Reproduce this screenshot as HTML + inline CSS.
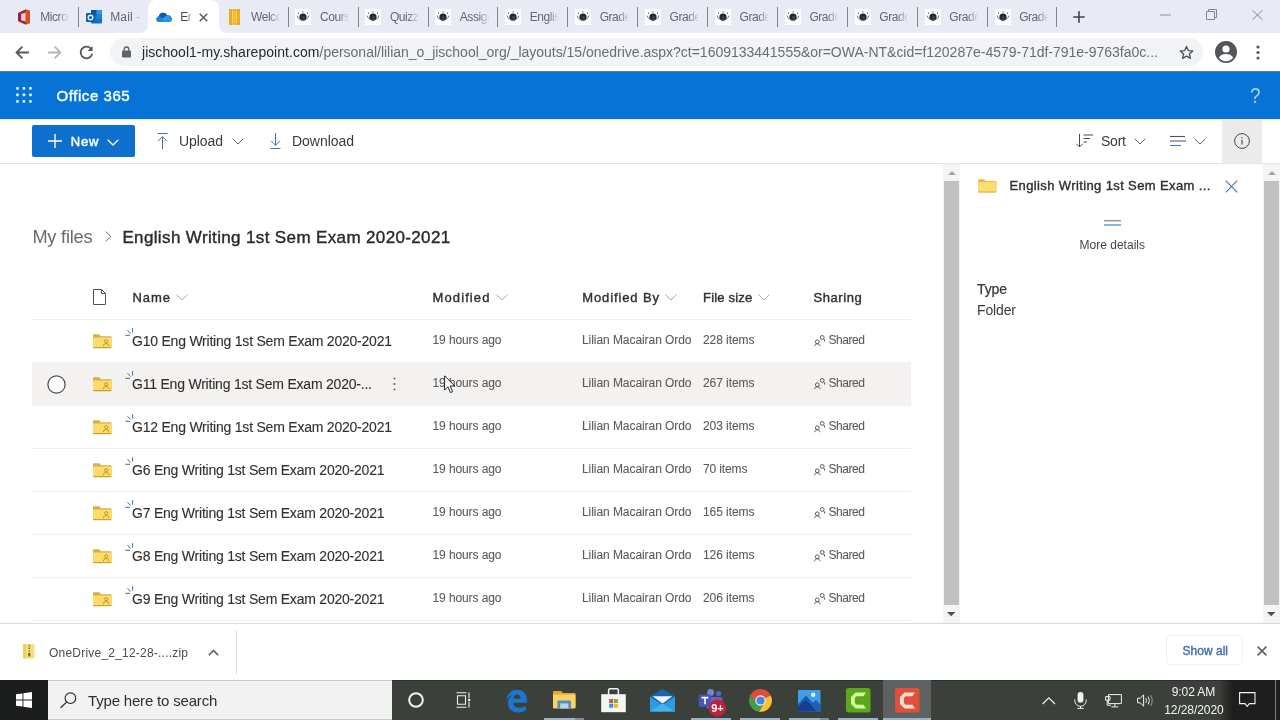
<!DOCTYPE html>
<html lang="en">
<head>
<meta charset="utf-8">
<title>English Writing 1st Sem Exam 2020-2021 - OneDrive</title>
<style>

*{box-sizing:border-box;margin:0;padding:0}
html,body{width:1280px;height:720px;overflow:hidden;background:#fff}
body{font-family:"Liberation Sans",sans-serif;color:#323130;position:relative;font-size:14px}
#root{position:absolute;left:0;top:0;width:1280px;height:720px;overflow:hidden}
.t{will-change:opacity}
.a{position:absolute}
svg{position:absolute;overflow:visible}
.t{position:absolute;white-space:nowrap;line-height:normal}
#tabstrip{left:0;top:0;width:1280px;height:33px;background:#e8ebf4}
#acttab{left:147.6px;top:0;width:71.3px;height:33px;background:#fff;border-radius:8px 8px 0 0}
.curl{width:8px;height:8px;top:25px;background:#fff}
.curl i{position:absolute;left:0;top:0;width:8px;height:8px;background:#e8ebf4}
#toolbar{left:0;top:33px;width:1280px;height:38px;background:#fff}
#omni{left:110px;top:38px;width:1093px;height:28px;border-radius:14px;background:#f1f3f4}
.sep{width:1px;height:20px;top:7px;background:#80848a}
.tt{overflow:hidden;-webkit-mask-image:linear-gradient(90deg,#000 0,#000 60%,transparent 98%);mask-image:linear-gradient(90deg,#000 0,#000 60%,transparent 98%)}
.fav{width:16px;height:16px;top:9px;background:#fdfdfe}
#suite{left:0;top:71px;width:1280px;height:48px;background:#0873d7;border-top:1px solid #4c7fb4}
#cmd{left:0;top:119px;width:1280px;height:45px;background:#fff;border-bottom:1px solid #e6e5e4;border-top:1px solid #dff3fd}
#newbtn{left:32px;top:125px;width:103px;height:32px;background:#0e70cd;border-radius:2px}
#infobtn{left:1222px;top:119px;width:40px;height:44px;background:#ecebea}
#hover{left:32px;top:362px;width:879px;height:43px;background:#f3f2f1}
.rl{left:32px;width:879px;height:1px;background:#f0efee}
.track{background:#f4f4f4;width:17px;top:164px;height:459px}
.thumb{background:#c1c1c1;width:15.2px;top:181px;height:424px;margin-left:.9px}
#dlbar{left:0;top:622.6px;width:1280px;height:58px;background:#fff;border-top:1px solid #d9d9d9}
#showall{left:1166px;top:635px;width:77px;height:30px;border:1px solid #f1f2f4;border-radius:4px;background:#fff}
#taskbar{left:0;top:680px;width:1280px;height:40px;background:#3c403a;border-top:1px solid #2c2f2b}
#start{left:0;top:680px;width:48px;height:40px;background:#1c1d1d}
#search{left:48px;top:680px;width:344px;height:40px;background:#f2f2f2;border-top:1px solid #c9c9c9;border-bottom:1px solid #c9c9c9}
#tbact{left:883px;top:680px;width:48px;height:40px;background:#5d6260}
.ul{top:718px;height:2px;background:#9bb3c6}

</style>
</head>
<body>
<div id="root">
<!-- ===== browser chrome ===== -->
<div class="a" id="tabstrip"></div>
<div class="a" id="acttab"></div>
<div class="a curl" style="left:139.6px"><i style="border-radius:0 0 8px 0"></i></div>
<div class="a curl" style="left:218.8px"><i style="border-radius:0 0 0 8px"></i></div>
<div class="a" id="toolbar"></div>
<div class="a" id="omni"></div>
<div class="a sep" style="left:77.9px"></div>
<div class="a sep" style="left:287.7px"></div>
<div class="a sep" style="left:357.6px"></div>
<div class="a sep" style="left:427.5px"></div>
<div class="a sep" style="left:497.4px"></div>
<div class="a sep" style="left:567.3px"></div>
<div class="a sep" style="left:637.3px"></div>
<div class="a sep" style="left:707.2px"></div>
<div class="a sep" style="left:777.1px"></div>
<div class="a sep" style="left:847.0px"></div>
<div class="a sep" style="left:916.9px"></div>
<div class="a sep" style="left:986.9px"></div>
<div class="a sep" style="left:1055.9px"></div>
<svg style="left:17px;top:9px" width="14" height="16" viewBox="0 0 14 16"><path d="M1 4.2 L8.6 0.6 L13 1.8 V14 L8.6 15.4 L1 12 Z" fill="#b3312c"/><path d="M8.6 0.6 L13 1.8 V14 L8.6 15.4 Z" fill="#d4501c"/><path d="M1 4.2 L8.6 0.6 V3 L4.2 4.8 V11.2 L8.6 13 V15.4 L1 12 Z" fill="#8c2b40"/><path d="M4.2 4.9 L8.6 3.4 V12.6 L4.2 11.2 Z" fill="#f6c3c6"/></svg>
<div class="t tt" style="left:40.30px;top:10.00px;font-size:12px;color:#63676e;width:30px;letter-spacing:-0.45px;">Microsoft</div>
<svg style="left:86px;top:9px" width="16" height="16" viewBox="0 0 16 16"><rect x="5" y="1" width="11" height="13.5" rx="1" fill="#1173c7"/><rect x="5" y="1" width="5.5" height="4.5" fill="#0d4f8f"/><rect x="10.5" y="1" width="5.5" height="4.5" fill="#2a9be6"/><rect x="10.5" y="5.5" width="5.5" height="4.5" fill="#1b83d6"/><rect x="0" y="4" width="9" height="9" rx="1" fill="#0f5ea8"/><circle cx="4.5" cy="8.5" r="2.3" fill="none" stroke="#e8f2fb" stroke-width="1.4"/></svg>
<div class="t tt" style="left:110.22px;top:10.00px;font-size:12px;color:#63676e;width:33px;letter-spacing:0.15px;-webkit-mask-image:linear-gradient(90deg,#000 0,#000 70%,transparent 96%);mask-image:linear-gradient(90deg,#000 0,#000 70%,transparent 96%);">Mail -</div>
<svg style="left:156px;top:11.5px" width="16.4" height="10.8" viewBox="0 0 18 12"><path d="M4 11.2 C1.6 11.2 0.3 9.7 0.3 8 C0.3 6.4 1.4 5.2 2.9 5 C3.4 2.6 5.3 0.8 7.8 0.8 C9.8 0.8 11.4 1.9 12.3 3.6 C15.2 3.4 17.6 5.2 17.6 7.7 C17.6 9.8 16 11.2 14 11.2 Z" fill="#1977c9"/><path d="M2.9 5 C3.4 2.6 5.3 0.8 7.8 0.8 C9.8 0.8 11.4 1.9 12.3 3.6 L6.5 7.2 Z" fill="#0f5aa6"/><path d="M4 11.2 C1.6 11.2 0.3 9.7 0.3 8 C0.3 6.4 1.4 5.2 2.9 5 C4.5 4.8 5.6 5.4 6.5 7.2 L14 11.2 Z" fill="#1b82d8"/><path d="M6.5 7.2 L12.3 3.6 C15.2 3.4 17.6 5.2 17.6 7.7 C17.6 9.8 16 11.2 14 11.2 L8 11.2 Z" fill="#2b95e6"/></svg>
<div class="t tt" style="left:180.14px;top:10.00px;font-size:12px;color:#45494e;width:11.5px;letter-spacing:-0.45px;">English</div>
<svg style="left:228.8px;top:8.7px" width="11" height="16" viewBox="0 0 11 16"><rect x="0" y="0" width="11" height="16" fill="#f8d968"/><rect x="0" y="0" width="3.1" height="16" fill="#e6ae2a"/><rect x="3.95" y="0" width="3.1" height="16" fill="#f0bd30"/><rect x="7.9" y="0" width="3.1" height="16" fill="#e6ae2a"/><path d="M0 1.3 H11 M0 14.7 H11" stroke="#cf9f35" stroke-width="0.8" opacity=".8"/></svg>
<div class="t tt" style="left:251.00px;top:10.00px;font-size:12px;color:#63676e;width:30px;letter-spacing:-0.45px;">Welcome</div>
<div class="a fav" style="left:295.4px"></div>
<svg style="left:295.4px;top:9px" width="16" height="16" viewBox="0 0 16 16"><circle cx="8" cy="8.1" r="3.6" fill="#23282f"/><path d="M2.2 6.6 A6 6 0 0 0 13.8 6.6" fill="none" stroke="#5d636b" stroke-width="0.9"/><path d="M8 2.2 V3.6 M3.5 3.6 V5 M12.5 3.6 V5" stroke="#4f555d" stroke-width="0.9"/><circle cx="8.6" cy="8.4" r="1.3" fill="#35504f"/></svg>
<div class="t tt" style="left:319.98px;top:10.00px;font-size:12px;color:#63676e;width:30px;letter-spacing:-0.45px;">Course</div>
<div class="a fav" style="left:365.3px"></div>
<svg style="left:365.3px;top:9px" width="16" height="16" viewBox="0 0 16 16"><circle cx="8" cy="8.1" r="3.6" fill="#23282f"/><path d="M2.2 6.6 A6 6 0 0 0 13.8 6.6" fill="none" stroke="#5d636b" stroke-width="0.9"/><path d="M8 2.2 V3.6 M3.5 3.6 V5 M12.5 3.6 V5" stroke="#4f555d" stroke-width="0.9"/><circle cx="8.6" cy="8.4" r="1.3" fill="#35504f"/></svg>
<div class="t tt" style="left:389.90px;top:10.00px;font-size:12px;color:#63676e;width:30px;letter-spacing:-0.45px;">Quizzes</div>
<div class="a fav" style="left:435.2px"></div>
<svg style="left:435.2px;top:9px" width="16" height="16" viewBox="0 0 16 16"><circle cx="8" cy="8.1" r="3.6" fill="#23282f"/><path d="M2.2 6.6 A6 6 0 0 0 13.8 6.6" fill="none" stroke="#5d636b" stroke-width="0.9"/><path d="M8 2.2 V3.6 M3.5 3.6 V5 M12.5 3.6 V5" stroke="#4f555d" stroke-width="0.9"/><circle cx="8.6" cy="8.4" r="1.3" fill="#35504f"/></svg>
<div class="t tt" style="left:459.82px;top:10.00px;font-size:12px;color:#63676e;width:30px;letter-spacing:-0.45px;">Assignment</div>
<div class="a fav" style="left:505.1px"></div>
<svg style="left:505.1px;top:9px" width="16" height="16" viewBox="0 0 16 16"><circle cx="8" cy="8.1" r="3.6" fill="#23282f"/><path d="M2.2 6.6 A6 6 0 0 0 13.8 6.6" fill="none" stroke="#5d636b" stroke-width="0.9"/><path d="M8 2.2 V3.6 M3.5 3.6 V5 M12.5 3.6 V5" stroke="#4f555d" stroke-width="0.9"/><circle cx="8.6" cy="8.4" r="1.3" fill="#35504f"/></svg>
<div class="t tt" style="left:529.74px;top:10.00px;font-size:12px;color:#63676e;width:30px;letter-spacing:-0.45px;">English</div>
<div class="a fav" style="left:575.1px"></div>
<svg style="left:575.1px;top:9px" width="16" height="16" viewBox="0 0 16 16"><circle cx="8" cy="8.1" r="3.6" fill="#23282f"/><path d="M2.2 6.6 A6 6 0 0 0 13.8 6.6" fill="none" stroke="#5d636b" stroke-width="0.9"/><path d="M8 2.2 V3.6 M3.5 3.6 V5 M12.5 3.6 V5" stroke="#4f555d" stroke-width="0.9"/><circle cx="8.6" cy="8.4" r="1.3" fill="#35504f"/></svg>
<div class="t tt" style="left:599.66px;top:10.00px;font-size:12px;color:#63676e;width:30px;letter-spacing:-0.45px;">Grade</div>
<div class="a fav" style="left:645.0px"></div>
<svg style="left:645.0px;top:9px" width="16" height="16" viewBox="0 0 16 16"><circle cx="8" cy="8.1" r="3.6" fill="#23282f"/><path d="M2.2 6.6 A6 6 0 0 0 13.8 6.6" fill="none" stroke="#5d636b" stroke-width="0.9"/><path d="M8 2.2 V3.6 M3.5 3.6 V5 M12.5 3.6 V5" stroke="#4f555d" stroke-width="0.9"/><circle cx="8.6" cy="8.4" r="1.3" fill="#35504f"/></svg>
<div class="t tt" style="left:669.58px;top:10.00px;font-size:12px;color:#63676e;width:30px;letter-spacing:-0.45px;">Grade</div>
<div class="a fav" style="left:714.9px"></div>
<svg style="left:714.9px;top:9px" width="16" height="16" viewBox="0 0 16 16"><circle cx="8" cy="8.1" r="3.6" fill="#23282f"/><path d="M2.2 6.6 A6 6 0 0 0 13.8 6.6" fill="none" stroke="#5d636b" stroke-width="0.9"/><path d="M8 2.2 V3.6 M3.5 3.6 V5 M12.5 3.6 V5" stroke="#4f555d" stroke-width="0.9"/><circle cx="8.6" cy="8.4" r="1.3" fill="#35504f"/></svg>
<div class="t tt" style="left:739.50px;top:10.00px;font-size:12px;color:#63676e;width:30px;letter-spacing:-0.45px;">Grade</div>
<div class="a fav" style="left:784.8px"></div>
<svg style="left:784.8px;top:9px" width="16" height="16" viewBox="0 0 16 16"><circle cx="8" cy="8.1" r="3.6" fill="#23282f"/><path d="M2.2 6.6 A6 6 0 0 0 13.8 6.6" fill="none" stroke="#5d636b" stroke-width="0.9"/><path d="M8 2.2 V3.6 M3.5 3.6 V5 M12.5 3.6 V5" stroke="#4f555d" stroke-width="0.9"/><circle cx="8.6" cy="8.4" r="1.3" fill="#35504f"/></svg>
<div class="t tt" style="left:809.42px;top:10.00px;font-size:12px;color:#63676e;width:30px;letter-spacing:-0.45px;">Grade</div>
<div class="a fav" style="left:854.7px"></div>
<svg style="left:854.7px;top:9px" width="16" height="16" viewBox="0 0 16 16"><circle cx="8" cy="8.1" r="3.6" fill="#23282f"/><path d="M2.2 6.6 A6 6 0 0 0 13.8 6.6" fill="none" stroke="#5d636b" stroke-width="0.9"/><path d="M8 2.2 V3.6 M3.5 3.6 V5 M12.5 3.6 V5" stroke="#4f555d" stroke-width="0.9"/><circle cx="8.6" cy="8.4" r="1.3" fill="#35504f"/></svg>
<div class="t tt" style="left:879.34px;top:10.00px;font-size:12px;color:#63676e;width:30px;letter-spacing:-0.45px;">Grade</div>
<div class="a fav" style="left:924.7px"></div>
<svg style="left:924.7px;top:9px" width="16" height="16" viewBox="0 0 16 16"><circle cx="8" cy="8.1" r="3.6" fill="#23282f"/><path d="M2.2 6.6 A6 6 0 0 0 13.8 6.6" fill="none" stroke="#5d636b" stroke-width="0.9"/><path d="M8 2.2 V3.6 M3.5 3.6 V5 M12.5 3.6 V5" stroke="#4f555d" stroke-width="0.9"/><circle cx="8.6" cy="8.4" r="1.3" fill="#35504f"/></svg>
<div class="t tt" style="left:949.26px;top:10.00px;font-size:12px;color:#63676e;width:30px;letter-spacing:-0.45px;">Grade</div>
<div class="a fav" style="left:994.6px"></div>
<svg style="left:994.6px;top:9px" width="16" height="16" viewBox="0 0 16 16"><circle cx="8" cy="8.1" r="3.6" fill="#23282f"/><path d="M2.2 6.6 A6 6 0 0 0 13.8 6.6" fill="none" stroke="#5d636b" stroke-width="0.9"/><path d="M8 2.2 V3.6 M3.5 3.6 V5 M12.5 3.6 V5" stroke="#4f555d" stroke-width="0.9"/><circle cx="8.6" cy="8.4" r="1.3" fill="#35504f"/></svg>
<div class="t tt" style="left:1019.18px;top:10.00px;font-size:12px;color:#63676e;width:30px;letter-spacing:-0.45px;">Grade</div>
<svg style="left:199px;top:13px" width="9" height="9" viewBox="0 0 9 9"><path d="M0.7 0.7 L8.3 8.3 M8.3 0.7 L0.7 8.3" stroke="#5a5e63" stroke-width="1.5" fill="none"/></svg>
<svg style="left:1073px;top:11px" width="12" height="12" viewBox="0 0 12 12"><path d="M6 0.3 V11.7 M0.3 6 H11.7" stroke="#3f4347" stroke-width="1.6" fill="none"/></svg>
<svg style="left:1160px;top:14px" width="11" height="2" viewBox="0 0 11 2"><path d="M0 1 H11" stroke="#8b8f95" stroke-width="1"/></svg>
<svg style="left:1206px;top:9px" width="11" height="11" viewBox="0 0 11 11"><path d="M0.5 2.5 H8.5 V10.5 H0.5 Z M2.5 2.5 V0.5 H10.5 V8.5 H8.5" stroke="#84888e" stroke-width="1" fill="none"/></svg>
<svg style="left:1252px;top:10px" width="11" height="10" viewBox="0 0 11 10"><path d="M0.5 0.3 L10.5 9.7 M10.5 0.3 L0.5 9.7" stroke="#84888e" stroke-width="1" fill="none"/></svg>
<svg style="left:15px;top:45px" width="15" height="15" viewBox="0 0 15 15"><path d="M14 7.5 H2 M7.4 1.6 L1.5 7.5 L7.4 13.4" stroke="#54585d" stroke-width="1.8" fill="none"/></svg>
<svg style="left:47px;top:45px" width="15" height="15" viewBox="0 0 15 15"><path d="M1 7.5 H13 M7.6 1.6 L13.5 7.5 L7.6 13.4" stroke="#b4b7bb" stroke-width="1.8" fill="none"/></svg>
<svg style="left:79px;top:45px" width="15" height="15" viewBox="0 0 15 15"><path d="M12.3 4.2 A5.8 5.8 0 1 0 13.2 8.6" stroke="#54585d" stroke-width="1.8" fill="none"/><path d="M13.6 1 V6 H8.6 Z" fill="#54585d"/></svg>
<svg style="left:122px;top:46px" width="9" height="12" viewBox="0 0 9 12"><rect x="0" y="4.6" width="9" height="7" rx="1" fill="#5f6368"/><path d="M2.2 5 V3.3 A2.3 2.3 0 0 1 6.8 3.3 V5" stroke="#5f6368" stroke-width="1.3" fill="none"/></svg>
<div class="t" style="left:142.00px;top:44.00px;font-size:14px;color:#27292c;letter-spacing:0.043px;">jischool1-my.sharepoint.com</div>
<div class="t" style="left:319.50px;top:44.00px;font-size:14px;color:#6a6e73;letter-spacing:-0.010px;">/personal/lilian_o_jischool_org/_layouts/15/onedrive.aspx?ct=1609133441555&amp;or=OWA-NT&amp;cid=f120287e-4579-71df-791e-9763fa0c...</div>
<svg style="left:1179px;top:45px" width="15" height="15" viewBox="0 0 15 15"><path d="M7.5 1.4 L9.3 5.6 L13.8 6 L10.4 9 L11.4 13.4 L7.5 11.1 L3.6 13.4 L4.6 9 L1.2 6 L5.7 5.6 Z" stroke="#4d5156" stroke-width="1.3" fill="none" stroke-linejoin="round"/></svg>
<svg style="left:1215px;top:41px" width="22" height="22" viewBox="0 0 22 22"><circle cx="11" cy="11" r="11" fill="#53575c"/><circle cx="11" cy="8" r="3.6" fill="#fff"/><path d="M3.8 16.6 C5.4 13.9 8 13 11 13 C14 13 16.6 13.9 18.2 16.6 A9 9 0 0 1 3.8 16.6 Z" fill="#fff"/></svg>
<svg style="left:1256px;top:45px" width="4" height="15" viewBox="0 0 4 15"><circle cx="2" cy="2" r="1.6" fill="#54585d"/><circle cx="2" cy="7.5" r="1.6" fill="#54585d"/><circle cx="2" cy="13" r="1.6" fill="#54585d"/></svg>
<!-- ===== Office 365 suite bar ===== -->
<div class="a" id="suite"></div>
<svg style="left:16px;top:87px" width="16" height="16" viewBox="0 0 16 16"><rect x="0.1" y="0.1" width="2.7" height="2.7" rx="0.7" fill="#d9f3ff"/><rect x="6.6" y="0.1" width="2.7" height="2.7" rx="0.7" fill="#d9f3ff"/><rect x="13.1" y="0.1" width="2.7" height="2.7" rx="0.7" fill="#d9f3ff"/><rect x="0.1" y="6.6" width="2.7" height="2.7" rx="0.7" fill="#d9f3ff"/><rect x="6.6" y="6.6" width="2.7" height="2.7" rx="0.7" fill="#d9f3ff"/><rect x="13.1" y="6.6" width="2.7" height="2.7" rx="0.7" fill="#d9f3ff"/><rect x="0.1" y="13.1" width="2.7" height="2.7" rx="0.7" fill="#d9f3ff"/><rect x="6.6" y="13.1" width="2.7" height="2.7" rx="0.7" fill="#d9f3ff"/><rect x="13.1" y="13.1" width="2.7" height="2.7" rx="0.7" fill="#d9f3ff"/></svg>
<div class="t" style="left:56.50px;top:87.30px;font-size:15px;color:#f1fbff;letter-spacing:0.566px;-webkit-text-stroke:0.5px #f1fbff;">Office 365</div>
<div class="t" style="left:1250.00px;top:83.40px;font-size:22px;color:rgba(190,236,255,.82);transform:scaleX(.86);transform-origin:0 0;">?</div>
<!-- ===== command bar ===== -->
<div class="a" id="cmd"></div>
<div class="a" id="infobtn"></div>
<div class="a" id="newbtn"></div>
<svg style="left:47.5px;top:133.5px" width="14" height="14" viewBox="0 0 14 14"><path d="M7 0 V14 M0 7 H14" stroke="#fff" stroke-width="1.4" fill="none"/></svg>
<div class="t" style="left:70.80px;top:134.40px;font-size:13px;color:#ffffff;letter-spacing:0.792px;-webkit-text-stroke:0.5px #ffffff;">New</div>
<svg style="left:107.3px;top:138.6px" width="12" height="7" viewBox="0 0 12 7"><path d="M0.6 0.6 L6 6 L11.4 0.6" stroke="#fff" stroke-width="1.3" fill="none"/></svg>
<svg style="left:157px;top:133px" width="11" height="16" viewBox="0 0 11 16"><path d="M0.5 0.5 H10.5 M5.5 16 V3.8 M1 8.2 L5.5 3.7 L10 8.2" stroke="#4f6f86" stroke-width="1" fill="none"/></svg>
<div class="t" style="left:179.00px;top:133.30px;font-size:14px;color:#3b3a39;letter-spacing:-0.075px;">Upload</div>
<svg style="left:231.8px;top:138.3px" width="12" height="7" viewBox="0 0 12 7"><path d="M0.6 0.6 L6 6 L11.4 0.6" stroke="#605e5c" stroke-width="1" fill="none"/></svg>
<svg style="left:270px;top:133px" width="11" height="16" viewBox="0 0 11 16"><path d="M0.5 15.5 H10.5 M5.5 0 V12.2 M1 7.8 L5.5 12.3 L10 7.8" stroke="#3c79b0" stroke-width="1" fill="none"/></svg>
<div class="t" style="left:292.00px;top:133.30px;font-size:14px;color:#3b3a39;letter-spacing:-0.038px;">Download</div>
<svg style="left:1076px;top:134px" width="18" height="14" viewBox="0 0 18 14"><path d="M3.5 0 V13 M0.3 9.8 L3.5 13 L6.7 9.8 M7.5 1 H17 M7.5 4.5 H14 M7.5 8 H11" stroke="#4a4948" stroke-width="1" fill="none"/></svg>
<div class="t" style="left:1101.00px;top:133.30px;font-size:14px;color:#3b3a39;letter-spacing:-0.229px;">Sort</div>
<svg style="left:1134.3px;top:138.3px" width="12" height="7" viewBox="0 0 12 7"><path d="M0.6 0.6 L6 6 L11.4 0.6" stroke="#605e5c" stroke-width="1" fill="none"/></svg>
<svg style="left:1170px;top:135.5px" width="16" height="10" viewBox="0 0 16 10"><path d="M0 0.5 H15" stroke="#4a5560" stroke-width="1.1"/><path d="M0 5 H16" stroke="#55626e" stroke-width="1.1"/><path d="M0 9.5 H11" stroke="#2f7fca" stroke-width="1.1"/></svg>
<svg style="left:1194.0px;top:138.3px" width="12" height="7" viewBox="0 0 12 7"><path d="M0.6 0.6 L6 6 L11.4 0.6" stroke="#605e5c" stroke-width="1" fill="none"/></svg>
<svg style="left:1233.5px;top:132.8px" width="16" height="16" viewBox="0 0 16 16"><circle cx="8" cy="8" r="7.4" stroke="#3f4750" stroke-width="1" fill="none"/><path d="M8 6.8 V11.6" stroke="#3f4750" stroke-width="1.1"/><circle cx="8" cy="4.7" r="0.7" fill="#3f4750"/></svg>
<!-- ===== breadcrumb ===== -->
<div class="t" style="left:32.40px;top:226.80px;font-size:18.2px;color:#6b6a68;letter-spacing:-0.206px;">My files</div>
<svg style="left:104.5px;top:231px" width="7" height="11" viewBox="0 0 7 11"><path d="M0.6 0.5 L6 5.5 L0.6 10.5" stroke="#767574" stroke-width="1" fill="none"/></svg>
<div class="t" style="left:122.40px;top:227.60px;font-size:17px;color:#2b2a29;letter-spacing:0.364px;-webkit-text-stroke:0.4px #2b2a29;">English Writing 1st Sem Exam 2020-2021</div>
<!-- ===== file list ===== -->
<div class="a" id="hover"></div>
<svg style="left:93px;top:289px" width="13" height="16" viewBox="0 0 13 16"><path d="M0.5 0.5 H8.5 L12.5 4.5 V15.5 H0.5 Z M8.5 0.5 V4.5 H12.5" stroke="#55514e" stroke-width="1" fill="none"/></svg>
<div class="t" style="left:132.50px;top:290.40px;font-size:13px;color:#323130;letter-spacing:0.904px;-webkit-text-stroke:0.4px #323130;">Name</div>
<svg style="left:176.0px;top:293.8px" width="12" height="7" viewBox="0 0 12 7"><path d="M0.4 0.5 L5.9 6 L11.4 0.5" stroke="#a9a7a5" stroke-width="1" fill="none"/></svg>
<div class="t" style="left:432.60px;top:290.40px;font-size:13px;color:#323130;letter-spacing:1.094px;-webkit-text-stroke:0.4px #323130;">Modified</div>
<svg style="left:496.0px;top:293.8px" width="12" height="7" viewBox="0 0 12 7"><path d="M0.4 0.5 L5.9 6 L11.4 0.5" stroke="#a9a7a5" stroke-width="1" fill="none"/></svg>
<div class="t" style="left:582.20px;top:290.40px;font-size:13px;color:#323130;letter-spacing:0.888px;-webkit-text-stroke:0.4px #323130;">Modified By</div>
<svg style="left:665.2px;top:293.8px" width="12" height="7" viewBox="0 0 12 7"><path d="M0.4 0.5 L5.9 6 L11.4 0.5" stroke="#a9a7a5" stroke-width="1" fill="none"/></svg>
<div class="t" style="left:703.00px;top:290.40px;font-size:13px;color:#323130;letter-spacing:0.202px;-webkit-text-stroke:0.4px #323130;">File size</div>
<svg style="left:758.3px;top:293.8px" width="12" height="7" viewBox="0 0 12 7"><path d="M0.4 0.5 L5.9 6 L11.4 0.5" stroke="#a9a7a5" stroke-width="1" fill="none"/></svg>
<div class="t" style="left:813.40px;top:290.40px;font-size:13px;color:#323130;letter-spacing:0.598px;-webkit-text-stroke:0.4px #323130;">Sharing</div>
<div class="a rl" style="top:319px"></div>
<svg style="left:93px;top:334px" width="19" height="15" viewBox="0 0 19 15"><path d="M0 1.2 Q0 0.3 0.9 0.3 H6.2 L8 2.2 H17.6 Q18.5 2.2 18.5 3.1 V13 H0 Z" fill="#d3b048"/><path d="M0 4.2 Q0 3.4 0.9 3.4 H17.6 Q18.5 3.4 18.5 4.2 V12.6 Q18.5 13.4 17.6 13.4 H0.9 Q0 13.4 0 12.6 Z" fill="#fbdc6c"/><path d="M0 13 H18.5 V13.6 Q18.5 14.2 17.6 14.2 H0.9 Q0 14.2 0 13.6 Z" fill="#c9a332"/><circle cx="13.2" cy="7.2" r="1.6" stroke="#c98a14" stroke-width="0.9" fill="none"/><path d="M10.4 12.2 C10.4 10.3 11.6 9.6 13.2 9.6 C14.8 9.6 16 10.3 16 12.2" stroke="#c98a14" stroke-width="0.9" fill="none"/></svg>
<svg style="left:125px;top:328px" width="9" height="9" viewBox="0 0 9 9"><path d="M7.6 0.2 V4.6 M2.5 2.2 L5.7 5.6 M0.3 7.3 H5" stroke="#3d6f96" stroke-width="1" fill="none"/></svg>
<div class="t" style="left:132.00px;top:332.80px;font-size:14px;color:#323130;letter-spacing:-0.222px;-webkit-text-stroke:0.12px #323130;">G10 Eng Writing 1st Sem Exam 2020-2021</div>
<div class="t" style="left:432.50px;top:333.40px;font-size:12px;color:#5e5c5a;letter-spacing:-0.097px;-webkit-text-stroke:0.1px #5e5c5a;">19 hours ago</div>
<div class="t" style="left:582.00px;top:333.40px;font-size:12px;color:#5e5c5a;letter-spacing:-0.064px;-webkit-text-stroke:0.1px #5e5c5a;">Lilian Macairan Ordo</div>
<div class="t" style="left:703.00px;top:333.40px;font-size:12px;color:#5e5c5a;letter-spacing:-0.066px;-webkit-text-stroke:0.1px #5e5c5a;">228 items</div>
<svg style="left:813.5px;top:335px" width="11" height="11" viewBox="0 0 11 11"><circle cx="8.2" cy="2.4" r="1.9" stroke="#5a5856" stroke-width="1" fill="none"/><path d="M9.7 3.8 C10.3 4.4 10.6 5.2 10.6 6.6" stroke="#5a5856" stroke-width="1" fill="none"/><circle cx="3.3" cy="6.8" r="1.9" stroke="#5a5856" stroke-width="1" fill="none"/><path d="M0.5 11.2 C0.9 9.6 1.9 8.8 3.3 8.8 C4.7 8.8 5.7 9.6 6.1 11.2" stroke="#5a5856" stroke-width="1" fill="none"/></svg>
<div class="t" style="left:828.50px;top:333.40px;font-size:12px;color:#5e5c5a;letter-spacing:-0.441px;-webkit-text-stroke:0.1px #5e5c5a;">Shared</div>
<svg style="left:93px;top:377px" width="19" height="15" viewBox="0 0 19 15"><path d="M0 1.2 Q0 0.3 0.9 0.3 H6.2 L8 2.2 H17.6 Q18.5 2.2 18.5 3.1 V13 H0 Z" fill="#d3b048"/><path d="M0 4.2 Q0 3.4 0.9 3.4 H17.6 Q18.5 3.4 18.5 4.2 V12.6 Q18.5 13.4 17.6 13.4 H0.9 Q0 13.4 0 12.6 Z" fill="#fbdc6c"/><path d="M0 13 H18.5 V13.6 Q18.5 14.2 17.6 14.2 H0.9 Q0 14.2 0 13.6 Z" fill="#c9a332"/><circle cx="13.2" cy="7.2" r="1.6" stroke="#c98a14" stroke-width="0.9" fill="none"/><path d="M10.4 12.2 C10.4 10.3 11.6 9.6 13.2 9.6 C14.8 9.6 16 10.3 16 12.2" stroke="#c98a14" stroke-width="0.9" fill="none"/></svg>
<svg style="left:125px;top:371px" width="9" height="9" viewBox="0 0 9 9"><path d="M7.6 0.2 V4.6 M2.5 2.2 L5.7 5.6 M0.3 7.3 H5" stroke="#3d6f96" stroke-width="1" fill="none"/></svg>
<div class="t" style="left:132.00px;top:375.80px;font-size:14px;color:#323130;letter-spacing:-0.214px;-webkit-text-stroke:0.12px #323130;">G11 Eng Writing 1st Sem Exam 2020-...</div>
<div class="t" style="left:432.50px;top:376.40px;font-size:12px;color:#5e5c5a;letter-spacing:-0.097px;-webkit-text-stroke:0.1px #5e5c5a;">19 hours ago</div>
<div class="t" style="left:582.00px;top:376.40px;font-size:12px;color:#5e5c5a;letter-spacing:-0.064px;-webkit-text-stroke:0.1px #5e5c5a;">Lilian Macairan Ordo</div>
<div class="t" style="left:703.00px;top:376.40px;font-size:12px;color:#5e5c5a;letter-spacing:-0.066px;-webkit-text-stroke:0.1px #5e5c5a;">267 items</div>
<svg style="left:813.5px;top:378px" width="11" height="11" viewBox="0 0 11 11"><circle cx="8.2" cy="2.4" r="1.9" stroke="#5a5856" stroke-width="1" fill="none"/><path d="M9.7 3.8 C10.3 4.4 10.6 5.2 10.6 6.6" stroke="#5a5856" stroke-width="1" fill="none"/><circle cx="3.3" cy="6.8" r="1.9" stroke="#5a5856" stroke-width="1" fill="none"/><path d="M0.5 11.2 C0.9 9.6 1.9 8.8 3.3 8.8 C4.7 8.8 5.7 9.6 6.1 11.2" stroke="#5a5856" stroke-width="1" fill="none"/></svg>
<div class="t" style="left:828.50px;top:376.40px;font-size:12px;color:#5e5c5a;letter-spacing:-0.441px;-webkit-text-stroke:0.1px #5e5c5a;">Shared</div>
<div class="a rl" style="top:405px"></div>
<svg style="left:93px;top:420px" width="19" height="15" viewBox="0 0 19 15"><path d="M0 1.2 Q0 0.3 0.9 0.3 H6.2 L8 2.2 H17.6 Q18.5 2.2 18.5 3.1 V13 H0 Z" fill="#d3b048"/><path d="M0 4.2 Q0 3.4 0.9 3.4 H17.6 Q18.5 3.4 18.5 4.2 V12.6 Q18.5 13.4 17.6 13.4 H0.9 Q0 13.4 0 12.6 Z" fill="#fbdc6c"/><path d="M0 13 H18.5 V13.6 Q18.5 14.2 17.6 14.2 H0.9 Q0 14.2 0 13.6 Z" fill="#c9a332"/><circle cx="13.2" cy="7.2" r="1.6" stroke="#c98a14" stroke-width="0.9" fill="none"/><path d="M10.4 12.2 C10.4 10.3 11.6 9.6 13.2 9.6 C14.8 9.6 16 10.3 16 12.2" stroke="#c98a14" stroke-width="0.9" fill="none"/></svg>
<svg style="left:125px;top:414px" width="9" height="9" viewBox="0 0 9 9"><path d="M7.6 0.2 V4.6 M2.5 2.2 L5.7 5.6 M0.3 7.3 H5" stroke="#3d6f96" stroke-width="1" fill="none"/></svg>
<div class="t" style="left:132.00px;top:418.80px;font-size:14px;color:#323130;letter-spacing:-0.222px;-webkit-text-stroke:0.12px #323130;">G12 Eng Writing 1st Sem Exam 2020-2021</div>
<div class="t" style="left:432.50px;top:419.40px;font-size:12px;color:#5e5c5a;letter-spacing:-0.097px;-webkit-text-stroke:0.1px #5e5c5a;">19 hours ago</div>
<div class="t" style="left:582.00px;top:419.40px;font-size:12px;color:#5e5c5a;letter-spacing:-0.064px;-webkit-text-stroke:0.1px #5e5c5a;">Lilian Macairan Ordo</div>
<div class="t" style="left:703.00px;top:419.40px;font-size:12px;color:#5e5c5a;letter-spacing:-0.066px;-webkit-text-stroke:0.1px #5e5c5a;">203 items</div>
<svg style="left:813.5px;top:421px" width="11" height="11" viewBox="0 0 11 11"><circle cx="8.2" cy="2.4" r="1.9" stroke="#5a5856" stroke-width="1" fill="none"/><path d="M9.7 3.8 C10.3 4.4 10.6 5.2 10.6 6.6" stroke="#5a5856" stroke-width="1" fill="none"/><circle cx="3.3" cy="6.8" r="1.9" stroke="#5a5856" stroke-width="1" fill="none"/><path d="M0.5 11.2 C0.9 9.6 1.9 8.8 3.3 8.8 C4.7 8.8 5.7 9.6 6.1 11.2" stroke="#5a5856" stroke-width="1" fill="none"/></svg>
<div class="t" style="left:828.50px;top:419.40px;font-size:12px;color:#5e5c5a;letter-spacing:-0.441px;-webkit-text-stroke:0.1px #5e5c5a;">Shared</div>
<div class="a rl" style="top:448px"></div>
<svg style="left:93px;top:463px" width="19" height="15" viewBox="0 0 19 15"><path d="M0 1.2 Q0 0.3 0.9 0.3 H6.2 L8 2.2 H17.6 Q18.5 2.2 18.5 3.1 V13 H0 Z" fill="#d3b048"/><path d="M0 4.2 Q0 3.4 0.9 3.4 H17.6 Q18.5 3.4 18.5 4.2 V12.6 Q18.5 13.4 17.6 13.4 H0.9 Q0 13.4 0 12.6 Z" fill="#fbdc6c"/><path d="M0 13 H18.5 V13.6 Q18.5 14.2 17.6 14.2 H0.9 Q0 14.2 0 13.6 Z" fill="#c9a332"/><circle cx="13.2" cy="7.2" r="1.6" stroke="#c98a14" stroke-width="0.9" fill="none"/><path d="M10.4 12.2 C10.4 10.3 11.6 9.6 13.2 9.6 C14.8 9.6 16 10.3 16 12.2" stroke="#c98a14" stroke-width="0.9" fill="none"/></svg>
<svg style="left:125px;top:457px" width="9" height="9" viewBox="0 0 9 9"><path d="M7.6 0.2 V4.6 M2.5 2.2 L5.7 5.6 M0.3 7.3 H5" stroke="#3d6f96" stroke-width="1" fill="none"/></svg>
<div class="t" style="left:132.00px;top:461.80px;font-size:14px;color:#323130;letter-spacing:-0.220px;-webkit-text-stroke:0.12px #323130;">G6 Eng Writing 1st Sem Exam 2020-2021</div>
<div class="t" style="left:432.50px;top:462.40px;font-size:12px;color:#5e5c5a;letter-spacing:-0.097px;-webkit-text-stroke:0.1px #5e5c5a;">19 hours ago</div>
<div class="t" style="left:582.00px;top:462.40px;font-size:12px;color:#5e5c5a;letter-spacing:-0.064px;-webkit-text-stroke:0.1px #5e5c5a;">Lilian Macairan Ordo</div>
<div class="t" style="left:703.00px;top:462.40px;font-size:12px;color:#5e5c5a;letter-spacing:-0.123px;-webkit-text-stroke:0.1px #5e5c5a;">70 items</div>
<svg style="left:813.5px;top:464px" width="11" height="11" viewBox="0 0 11 11"><circle cx="8.2" cy="2.4" r="1.9" stroke="#5a5856" stroke-width="1" fill="none"/><path d="M9.7 3.8 C10.3 4.4 10.6 5.2 10.6 6.6" stroke="#5a5856" stroke-width="1" fill="none"/><circle cx="3.3" cy="6.8" r="1.9" stroke="#5a5856" stroke-width="1" fill="none"/><path d="M0.5 11.2 C0.9 9.6 1.9 8.8 3.3 8.8 C4.7 8.8 5.7 9.6 6.1 11.2" stroke="#5a5856" stroke-width="1" fill="none"/></svg>
<div class="t" style="left:828.50px;top:462.40px;font-size:12px;color:#5e5c5a;letter-spacing:-0.441px;-webkit-text-stroke:0.1px #5e5c5a;">Shared</div>
<div class="a rl" style="top:491px"></div>
<svg style="left:93px;top:506px" width="19" height="15" viewBox="0 0 19 15"><path d="M0 1.2 Q0 0.3 0.9 0.3 H6.2 L8 2.2 H17.6 Q18.5 2.2 18.5 3.1 V13 H0 Z" fill="#d3b048"/><path d="M0 4.2 Q0 3.4 0.9 3.4 H17.6 Q18.5 3.4 18.5 4.2 V12.6 Q18.5 13.4 17.6 13.4 H0.9 Q0 13.4 0 12.6 Z" fill="#fbdc6c"/><path d="M0 13 H18.5 V13.6 Q18.5 14.2 17.6 14.2 H0.9 Q0 14.2 0 13.6 Z" fill="#c9a332"/><circle cx="13.2" cy="7.2" r="1.6" stroke="#c98a14" stroke-width="0.9" fill="none"/><path d="M10.4 12.2 C10.4 10.3 11.6 9.6 13.2 9.6 C14.8 9.6 16 10.3 16 12.2" stroke="#c98a14" stroke-width="0.9" fill="none"/></svg>
<svg style="left:125px;top:500px" width="9" height="9" viewBox="0 0 9 9"><path d="M7.6 0.2 V4.6 M2.5 2.2 L5.7 5.6 M0.3 7.3 H5" stroke="#3d6f96" stroke-width="1" fill="none"/></svg>
<div class="t" style="left:132.00px;top:504.80px;font-size:14px;color:#323130;letter-spacing:-0.220px;-webkit-text-stroke:0.12px #323130;">G7 Eng Writing 1st Sem Exam 2020-2021</div>
<div class="t" style="left:432.50px;top:505.40px;font-size:12px;color:#5e5c5a;letter-spacing:-0.097px;-webkit-text-stroke:0.1px #5e5c5a;">19 hours ago</div>
<div class="t" style="left:582.00px;top:505.40px;font-size:12px;color:#5e5c5a;letter-spacing:-0.064px;-webkit-text-stroke:0.1px #5e5c5a;">Lilian Macairan Ordo</div>
<div class="t" style="left:703.00px;top:505.40px;font-size:12px;color:#5e5c5a;letter-spacing:-0.066px;-webkit-text-stroke:0.1px #5e5c5a;">165 items</div>
<svg style="left:813.5px;top:507px" width="11" height="11" viewBox="0 0 11 11"><circle cx="8.2" cy="2.4" r="1.9" stroke="#5a5856" stroke-width="1" fill="none"/><path d="M9.7 3.8 C10.3 4.4 10.6 5.2 10.6 6.6" stroke="#5a5856" stroke-width="1" fill="none"/><circle cx="3.3" cy="6.8" r="1.9" stroke="#5a5856" stroke-width="1" fill="none"/><path d="M0.5 11.2 C0.9 9.6 1.9 8.8 3.3 8.8 C4.7 8.8 5.7 9.6 6.1 11.2" stroke="#5a5856" stroke-width="1" fill="none"/></svg>
<div class="t" style="left:828.50px;top:505.40px;font-size:12px;color:#5e5c5a;letter-spacing:-0.441px;-webkit-text-stroke:0.1px #5e5c5a;">Shared</div>
<div class="a rl" style="top:534px"></div>
<svg style="left:93px;top:549px" width="19" height="15" viewBox="0 0 19 15"><path d="M0 1.2 Q0 0.3 0.9 0.3 H6.2 L8 2.2 H17.6 Q18.5 2.2 18.5 3.1 V13 H0 Z" fill="#d3b048"/><path d="M0 4.2 Q0 3.4 0.9 3.4 H17.6 Q18.5 3.4 18.5 4.2 V12.6 Q18.5 13.4 17.6 13.4 H0.9 Q0 13.4 0 12.6 Z" fill="#fbdc6c"/><path d="M0 13 H18.5 V13.6 Q18.5 14.2 17.6 14.2 H0.9 Q0 14.2 0 13.6 Z" fill="#c9a332"/><circle cx="13.2" cy="7.2" r="1.6" stroke="#c98a14" stroke-width="0.9" fill="none"/><path d="M10.4 12.2 C10.4 10.3 11.6 9.6 13.2 9.6 C14.8 9.6 16 10.3 16 12.2" stroke="#c98a14" stroke-width="0.9" fill="none"/></svg>
<svg style="left:125px;top:543px" width="9" height="9" viewBox="0 0 9 9"><path d="M7.6 0.2 V4.6 M2.5 2.2 L5.7 5.6 M0.3 7.3 H5" stroke="#3d6f96" stroke-width="1" fill="none"/></svg>
<div class="t" style="left:132.00px;top:547.80px;font-size:14px;color:#323130;letter-spacing:-0.220px;-webkit-text-stroke:0.12px #323130;">G8 Eng Writing 1st Sem Exam 2020-2021</div>
<div class="t" style="left:432.50px;top:548.40px;font-size:12px;color:#5e5c5a;letter-spacing:-0.097px;-webkit-text-stroke:0.1px #5e5c5a;">19 hours ago</div>
<div class="t" style="left:582.00px;top:548.40px;font-size:12px;color:#5e5c5a;letter-spacing:-0.064px;-webkit-text-stroke:0.1px #5e5c5a;">Lilian Macairan Ordo</div>
<div class="t" style="left:703.00px;top:548.40px;font-size:12px;color:#5e5c5a;letter-spacing:-0.066px;-webkit-text-stroke:0.1px #5e5c5a;">126 items</div>
<svg style="left:813.5px;top:550px" width="11" height="11" viewBox="0 0 11 11"><circle cx="8.2" cy="2.4" r="1.9" stroke="#5a5856" stroke-width="1" fill="none"/><path d="M9.7 3.8 C10.3 4.4 10.6 5.2 10.6 6.6" stroke="#5a5856" stroke-width="1" fill="none"/><circle cx="3.3" cy="6.8" r="1.9" stroke="#5a5856" stroke-width="1" fill="none"/><path d="M0.5 11.2 C0.9 9.6 1.9 8.8 3.3 8.8 C4.7 8.8 5.7 9.6 6.1 11.2" stroke="#5a5856" stroke-width="1" fill="none"/></svg>
<div class="t" style="left:828.50px;top:548.40px;font-size:12px;color:#5e5c5a;letter-spacing:-0.441px;-webkit-text-stroke:0.1px #5e5c5a;">Shared</div>
<div class="a rl" style="top:577px"></div>
<svg style="left:93px;top:592px" width="19" height="15" viewBox="0 0 19 15"><path d="M0 1.2 Q0 0.3 0.9 0.3 H6.2 L8 2.2 H17.6 Q18.5 2.2 18.5 3.1 V13 H0 Z" fill="#d3b048"/><path d="M0 4.2 Q0 3.4 0.9 3.4 H17.6 Q18.5 3.4 18.5 4.2 V12.6 Q18.5 13.4 17.6 13.4 H0.9 Q0 13.4 0 12.6 Z" fill="#fbdc6c"/><path d="M0 13 H18.5 V13.6 Q18.5 14.2 17.6 14.2 H0.9 Q0 14.2 0 13.6 Z" fill="#c9a332"/><circle cx="13.2" cy="7.2" r="1.6" stroke="#c98a14" stroke-width="0.9" fill="none"/><path d="M10.4 12.2 C10.4 10.3 11.6 9.6 13.2 9.6 C14.8 9.6 16 10.3 16 12.2" stroke="#c98a14" stroke-width="0.9" fill="none"/></svg>
<svg style="left:125px;top:586px" width="9" height="9" viewBox="0 0 9 9"><path d="M7.6 0.2 V4.6 M2.5 2.2 L5.7 5.6 M0.3 7.3 H5" stroke="#3d6f96" stroke-width="1" fill="none"/></svg>
<div class="t" style="left:132.00px;top:590.80px;font-size:14px;color:#323130;letter-spacing:-0.220px;-webkit-text-stroke:0.12px #323130;">G9 Eng Writing 1st Sem Exam 2020-2021</div>
<div class="t" style="left:432.50px;top:591.40px;font-size:12px;color:#5e5c5a;letter-spacing:-0.097px;-webkit-text-stroke:0.1px #5e5c5a;">19 hours ago</div>
<div class="t" style="left:582.00px;top:591.40px;font-size:12px;color:#5e5c5a;letter-spacing:-0.064px;-webkit-text-stroke:0.1px #5e5c5a;">Lilian Macairan Ordo</div>
<div class="t" style="left:703.00px;top:591.40px;font-size:12px;color:#5e5c5a;letter-spacing:-0.066px;-webkit-text-stroke:0.1px #5e5c5a;">206 items</div>
<svg style="left:813.5px;top:593px" width="11" height="11" viewBox="0 0 11 11"><circle cx="8.2" cy="2.4" r="1.9" stroke="#5a5856" stroke-width="1" fill="none"/><path d="M9.7 3.8 C10.3 4.4 10.6 5.2 10.6 6.6" stroke="#5a5856" stroke-width="1" fill="none"/><circle cx="3.3" cy="6.8" r="1.9" stroke="#5a5856" stroke-width="1" fill="none"/><path d="M0.5 11.2 C0.9 9.6 1.9 8.8 3.3 8.8 C4.7 8.8 5.7 9.6 6.1 11.2" stroke="#5a5856" stroke-width="1" fill="none"/></svg>
<div class="t" style="left:828.50px;top:591.40px;font-size:12px;color:#5e5c5a;letter-spacing:-0.441px;-webkit-text-stroke:0.1px #5e5c5a;">Shared</div>
<div class="a rl" style="top:620px"></div>
<svg style="left:46.5px;top:374.5px" width="19" height="19" viewBox="0 0 19 19"><circle cx="9.5" cy="9.5" r="8.6" stroke="#4a4948" stroke-width="1.2" fill="#fff"/></svg>
<svg style="left:392.5px;top:377px" width="3" height="14" viewBox="0 0 3 14"><circle cx="1.5" cy="1.5" r="1" fill="#605e5c"/><circle cx="1.5" cy="7" r="1" fill="#605e5c"/><circle cx="1.5" cy="12.5" r="1" fill="#605e5c"/></svg>
<svg style="left:444px;top:375px" width="12" height="19" viewBox="0 0 12 19"><path d="M0.6 0.8 V15 L4 11.8 L6.4 17.6 L8.6 16.6 L6.2 11 H10.8 Z" fill="#fff" stroke="#222" stroke-width="1" stroke-linejoin="round"/></svg>
<!-- ===== scrollbars ===== -->
<div class="a track" style="left:943px"></div>
<div class="a thumb" style="left:943px"></div>
<svg style="left:947.6px;top:170.8px" width="8" height="4.2" viewBox="0 0 8 4"><path d="M0 4 L4 0 L8 4 Z" fill="#a3a3a3"/></svg>
<svg style="left:947.2px;top:612px" width="8.4" height="4.2" viewBox="0 0 8 4"><path d="M0 0 L4 4 L8 0 Z" fill="#505050"/></svg>
<div class="a track" style="left:1263px"></div>
<div class="a thumb" style="left:1263px"></div>
<svg style="left:1267.6px;top:170.8px" width="8" height="4.2" viewBox="0 0 8 4"><path d="M0 4 L4 0 L8 4 Z" fill="#a3a3a3"/></svg>
<svg style="left:1267.2px;top:612px" width="8.4" height="4.2" viewBox="0 0 8 4"><path d="M0 0 L4 4 L8 0 Z" fill="#505050"/></svg>
<!-- ===== details pane ===== -->
<svg style="left:978px;top:179px" width="19" height="14" viewBox="0 0 19 14"><path d="M0 1 Q0 0.2 0.9 0.2 H6 L7.8 2 H17.6 Q18.5 2 18.5 2.9 V12 H0 Z" fill="#e9bb3a"/><path d="M0 3.9 Q0 3.1 0.9 3.1 H17.6 Q18.5 3.1 18.5 3.9 V12.6 Q18.5 13.4 17.6 13.4 H0.9 Q0 13.4 0 12.6 Z" fill="#fbdd72"/><path d="M0 12.6 H18.5 V12.8 Q18.5 13.6 17.6 13.6 H0.9 Q0 13.6 0 12.8 Z" fill="#dcaa2c"/></svg>
<div class="t" style="left:1009.50px;top:178.40px;font-size:13px;color:#323130;letter-spacing:0.379px;-webkit-text-stroke:0.4px #323130;">English Writing 1st Sem Exam ...</div>
<svg style="left:1224.5px;top:179.5px" width="13" height="13" viewBox="0 0 13 13"><path d="M0.7 0.7 L12.3 12.3 M12.3 0.7 L0.7 12.3" stroke="#3a7fb6" stroke-width="1.15" fill="none"/></svg>
<svg style="left:1103.5px;top:220px" width="17" height="6" viewBox="0 0 17 6"><path d="M0 0.8 H17" stroke="#5c6670" stroke-width="1"/><path d="M0 5 H17" stroke="#3a86cf" stroke-width="1.2"/></svg>
<div class="t" style="left:1079.50px;top:237.90px;font-size:12px;color:#484644;letter-spacing:0.011px;">More details</div>
<div class="t" style="left:977.00px;top:281.00px;font-size:14px;color:#3b3a39;letter-spacing:-0.120px;-webkit-text-stroke:0.25px #3b3a39;">Type</div>
<div class="t" style="left:977.00px;top:302.30px;font-size:14px;color:#3b3a39;letter-spacing:-0.138px;">Folder</div>
<!-- ===== download shelf ===== -->
<div class="a" id="dlbar"></div>
<svg style="left:22.5px;top:643.5px" width="12" height="15" viewBox="0 0 12 15"><rect x="0" y="0" width="11.5" height="14.5" rx="0.8" fill="#f7dc82"/><rect x="0" y="0" width="3" height="14.5" fill="#f1cd62"/><path d="M6.3 1 V11" stroke="#8a7530" stroke-width="1.6" stroke-dasharray="1.4 1.2"/><rect x="5.2" y="9" width="2.2" height="3.4" fill="#7d6a2a"/></svg>
<div class="t" style="left:49.00px;top:646.00px;font-size:12px;color:#4a4d51;letter-spacing:0.214px;">OneDrive_2_12-28-....zip</div>
<svg style="left:208px;top:649px" width="11" height="7" viewBox="0 0 11 7"><path d="M0.8 6.2 L5.5 1.4 L10.2 6.2" stroke="#5a5e63" stroke-width="1.6" fill="none"/></svg>
<div class="a" style="left:236px;top:631px;width:1px;height:43px;background:#d5d7da"></div>
<div class="a" id="showall"></div>
<div class="t" style="left:1182.50px;top:644.00px;font-size:12px;color:#3f6fae;letter-spacing:0.020px;-webkit-text-stroke:0.4px #3f6fae;">Show all</div>
<svg style="left:1257px;top:646px" width="10" height="10" viewBox="0 0 10 10"><path d="M0.6 0.6 L9.4 9.4 M9.4 0.6 L0.6 9.4" stroke="#5a5e63" stroke-width="1.5" fill="none"/></svg>
<!-- ===== windows taskbar ===== -->
<div class="a" id="taskbar"></div>
<div class="a" style="left:1218px;top:680px;width:62px;height:40px;background:linear-gradient(90deg,rgba(30,30,30,0),#1e1e1e 15px)"></div>
<div class="a" id="start"></div>
<div class="a" id="search"></div>
<div class="a" id="tbact"></div>
<svg style="left:16px;top:692px" width="16" height="16" viewBox="0 0 16 16"><path d="M0 2.3 L6.5 1.4 V7.6 H0 Z M7.4 1.3 L16 0 V7.6 H7.4 Z M0 8.4 H6.5 V14.6 L0 13.7 Z M7.4 8.4 H16 V16 L7.4 14.7 Z" fill="#fff"/></svg>
<svg style="left:60px;top:692px" width="17" height="17" viewBox="0 0 17 17"><circle cx="10.4" cy="6.2" r="5.3" stroke="#2b2b2b" stroke-width="1.15" fill="none"/><path d="M6.6 10.1 L0.6 15.8" stroke="#2b2b2b" stroke-width="1.25"/></svg>
<div class="t" style="left:88.00px;top:692.20px;font-size:15px;color:#2e2e2e;letter-spacing:-0.182px;">Type here to search</div>
<svg style="left:408px;top:692px" width="16" height="16" viewBox="0 0 16 16"><circle cx="8" cy="8" r="6.8" stroke="#f4f4f4" stroke-width="2" fill="none"/></svg>
<svg style="left:456px;top:692px" width="17" height="16" viewBox="0 0 17 16"><path d="M0.5 0.8 H10.5 M0.5 15.2 H10.5 M1.5 3.8 H9.5 V12.2 H1.5 Z M13 0.5 V6 M13 10 V15.5" stroke="#f0f0f0" stroke-width="1.1" fill="none"/><rect x="12" y="6.8" width="2.2" height="2.4" fill="#f0f0f0"/></svg>
<svg style="left:505px;top:689px" width="23" height="24" viewBox="0 0 23 24"><path d="M1.2 11.5 C2 4.8 6.6 0.8 12.2 0.8 C18.6 0.8 22 5.6 22 11.4 V13.8 H8.2 C8.4 17 10.8 18.8 14.2 18.8 C16.6 18.8 18.8 18.2 20.8 17 V21.6 C18.6 22.8 16 23.4 13 23.4 C6.8 23.4 3 19.6 3 14 C3 10.4 4.8 7.6 7.8 6 C5 6.6 2.6 8.6 1.2 11.5 Z M8.4 9.8 H15.6 C15.6 7.2 14.4 5.6 12.1 5.6 C10 5.6 8.7 7.2 8.4 9.8 Z" fill="#1b76cf" fill-rule="evenodd"/></svg>
<svg style="left:553px;top:690px" width="23" height="20" viewBox="0 0 23 20"><path d="M0 2 Q0 1 1 1 H8 L10 3 H21.5 Q22.5 3 22.5 4 V17 H0 Z" fill="#e5a929"/><rect x="0" y="4.6" width="22.5" height="13.8" rx="1" fill="#f8d268"/><path d="M4.5 18.4 V11.6 Q4.5 10.6 5.5 10.6 H17 Q18 10.6 18 11.6 V18.4 Z" fill="#4f8fc0"/><rect x="7.2" y="13.4" width="8.2" height="5" fill="#b9d3e4"/></svg>
<svg style="left:600.5px;top:688px" width="25" height="25" viewBox="0 0 25 25"><path d="M7.6 6.5 V2.4 Q7.6 0.8 9.2 0.8 H15.8 Q17.4 0.8 17.4 2.4 V6.5" stroke="#f4f4f4" stroke-width="1.5" fill="none"/><rect x="0.2" y="6.2" width="24.6" height="18" fill="#f5f5f5"/><rect x="8.2" y="11" width="4" height="4" fill="#e0533a"/><rect x="12.9" y="11" width="4" height="4" fill="#78b43c"/><rect x="8.2" y="15.7" width="4" height="4" fill="#2f97d8"/><rect x="12.9" y="15.7" width="4" height="4" fill="#f2b928"/></svg>
<svg style="left:649.5px;top:689px" width="25" height="23" viewBox="0 0 25 23"><path d="M0 7.5 L12.5 0 L25 7.5 V22 H0 Z" fill="#1767b0"/><path d="M2.6 7.2 H22.4 L12.5 14.6 Z" fill="#eef6fc"/><path d="M0 7.8 L12.5 16 L25 7.8 V22.4 H0 Z" fill="#2c9be2"/><path d="M0 22.4 L12.5 14.6 L25 22.4 Z" fill="#49b2ee"/></svg>
<svg style="left:698px;top:688px" width="29" height="30" viewBox="0 0 29 30"><circle cx="12.6" cy="4.4" r="3.4" fill="#7b83d6"/><circle cx="20.6" cy="5.6" r="2.6" fill="#5a62c4"/><path d="M8 9 H22.6 Q24.4 9 24.4 10.8 V17 Q24.4 21.4 19 21.4 H13 Q8 21.4 8 17 Z" fill="#5d66c8"/><rect x="0.8" y="6.4" width="12.4" height="12.4" rx="1.2" fill="#4b55b8"/><path d="M3.6 9.6 H10.4 M7 9.6 V16.2" stroke="#fff" stroke-width="1.6" fill="none"/><circle cx="19.4" cy="20" r="8.6" fill="#c41f3a"/></svg>
<div class="t" style="left:711.20px;top:702.20px;font-size:11px;color:#ffffff;letter-spacing:0.053px;font-weight:700;">9+</div>
<svg style="left:748.5px;top:688.5px" width="23" height="23" viewBox="0 0 23 23"><circle cx="11.5" cy="11.5" r="11.3" fill="#de4c3c"/><path d="M11.5 11.5 L1.7 5.9 A11.3 11.3 0 0 0 10.2 22.7 L15.2 13.6 Z" fill="#37a14d"/><path d="M11.5 11.5 L21.7 6.6 A11.3 11.3 0 0 1 10.2 22.7 L15.6 13.4 Z" fill="#f6c531"/><path d="M1.7 5.9 A11.3 11.3 0 0 1 21.7 6.6 H11.5 L6.9 13.6 Z" fill="#de4c3c"/><circle cx="11.5" cy="11.5" r="5.2" fill="#f4f4f4"/><circle cx="11.5" cy="11.5" r="4.1" fill="#4a87e0"/></svg>
<svg style="left:798px;top:689.5px" width="23" height="22" viewBox="0 0 23 22"><rect x="0" y="0" width="22.5" height="21.5" rx="1" fill="#3f9ee6"/><path d="M0 14 L8 5.6 L15 13 L18 10 L22.5 14.5 V21.5 H0 Z" fill="#1e5fb4"/><path d="M0 17 L8 9.6 L18.4 21.5 H0 Z" fill="#153f8e"/><circle cx="15.2" cy="4.8" r="2.2" fill="#d8f0ff"/></svg>
<svg style="left:845.5px;top:688px" width="25" height="25" viewBox="0 0 25 25"><rect x="0" y="0" width="24.5" height="24.5" rx="2.5" fill="#5aa81c"/><path d="M20 4.6 H9.6 L5 9 V16 L9.6 20.4 H20 L17.4 16.8 H10.6 L8.8 15 V10 L10.6 8.2 H17.4 Z" fill="#d4f7a0"/></svg>
<svg style="left:895.0px;top:688px" width="25" height="25" viewBox="0 0 25 25"><rect x="0" y="0" width="24.5" height="24.5" rx="2.5" fill="#e2503a"/><path d="M20 4.6 H9.6 L5 9 V16 L9.6 20.4 H20 L17.4 16.8 H10.6 L8.8 15 V10 L10.6 8.2 H17.4 Z" fill="#ffe4dc"/></svg>
<div class="a ul" style="left:544px;width:40px"></div>
<div class="a ul" style="left:691px;width:40px"></div>
<div class="a ul" style="left:740px;width:40px"></div>
<div class="a ul" style="left:789px;width:40px"></div>
<div class="a ul" style="left:838px;width:40px"></div>
<div class="a ul" style="left:883px;width:48px"></div>
<div class="a" style="left:575px;top:718px;width:9px;height:2px;background:#7b8f9d"></div>
<div class="a" style="left:820px;top:718px;width:9px;height:2px;background:#7b8f9d"></div>
<svg style="left:1042px;top:696.5px" width="14" height="8" viewBox="0 0 14 8"><path d="M0.6 7 L6.8 0.8 L13 7" stroke="#f2f2f2" stroke-width="1.2" fill="none"/></svg>
<svg style="left:1074px;top:691.5px" width="13" height="17" viewBox="0 0 13 17"><rect x="3.6" y="0" width="5.8" height="10.6" rx="2.9" fill="#f4f4f4"/><path d="M0.8 7.4 V8.6 A5.7 5.7 0 0 0 12.2 8.6 V7.4 M6.5 14.2 V16.2 M3.4 16.4 H9.6" stroke="#f0f0f0" stroke-width="1" fill="none"/></svg>
<svg style="left:1104.5px;top:694px" width="17" height="14" viewBox="0 0 17 14"><path d="M3.4 0.6 H16.4 V9.6 H3.4 Z M9.8 9.6 V12.6 M6.4 12.9 H13.2 M0.6 2.6 H5 V6.2 H0.6 Z M2.2 6.2 V11.2 H6" stroke="#f0f0f0" stroke-width="1" fill="none"/></svg>
<svg style="left:1136.5px;top:694px" width="17" height="13" viewBox="0 0 17 13"><path d="M0.6 4.2 H3.2 L6.6 0.9 V12.1 L3.2 8.8 H0.6 Z" stroke="#f0f0f0" stroke-width="1" fill="none"/><path d="M8.8 4.2 Q10.2 6.5 8.8 8.8 M11.2 2.6 Q13.6 6.5 11.2 10.4" stroke="#f0f0f0" stroke-width="1" fill="none"/><path d="M13.6 1 Q16.8 6.5 13.6 12" stroke="#9a9c9b" stroke-width="1" fill="none"/></svg>
<div class="t" style="left:1171.75px;top:684.50px;font-size:12px;color:#f4f4f4;letter-spacing:-0.089px;">9:02 AM</div>
<div class="t" style="left:1164.25px;top:703.00px;font-size:12px;color:#f4f4f4;letter-spacing:-0.062px;">12/28/2020</div>
<svg style="left:1239px;top:692px" width="17" height="16" viewBox="0 0 17 16"><path d="M0.6 0.6 H16 V11.6 H10.4 L8.2 14.4 L6 11.6 H0.6 Z" stroke="#f4f4f4" stroke-width="1.1" fill="none"/></svg>
<div class="a" style="left:1275px;top:680px;width:1px;height:40px;background:#7c7c7c"></div>
</div>
</body>
</html>
